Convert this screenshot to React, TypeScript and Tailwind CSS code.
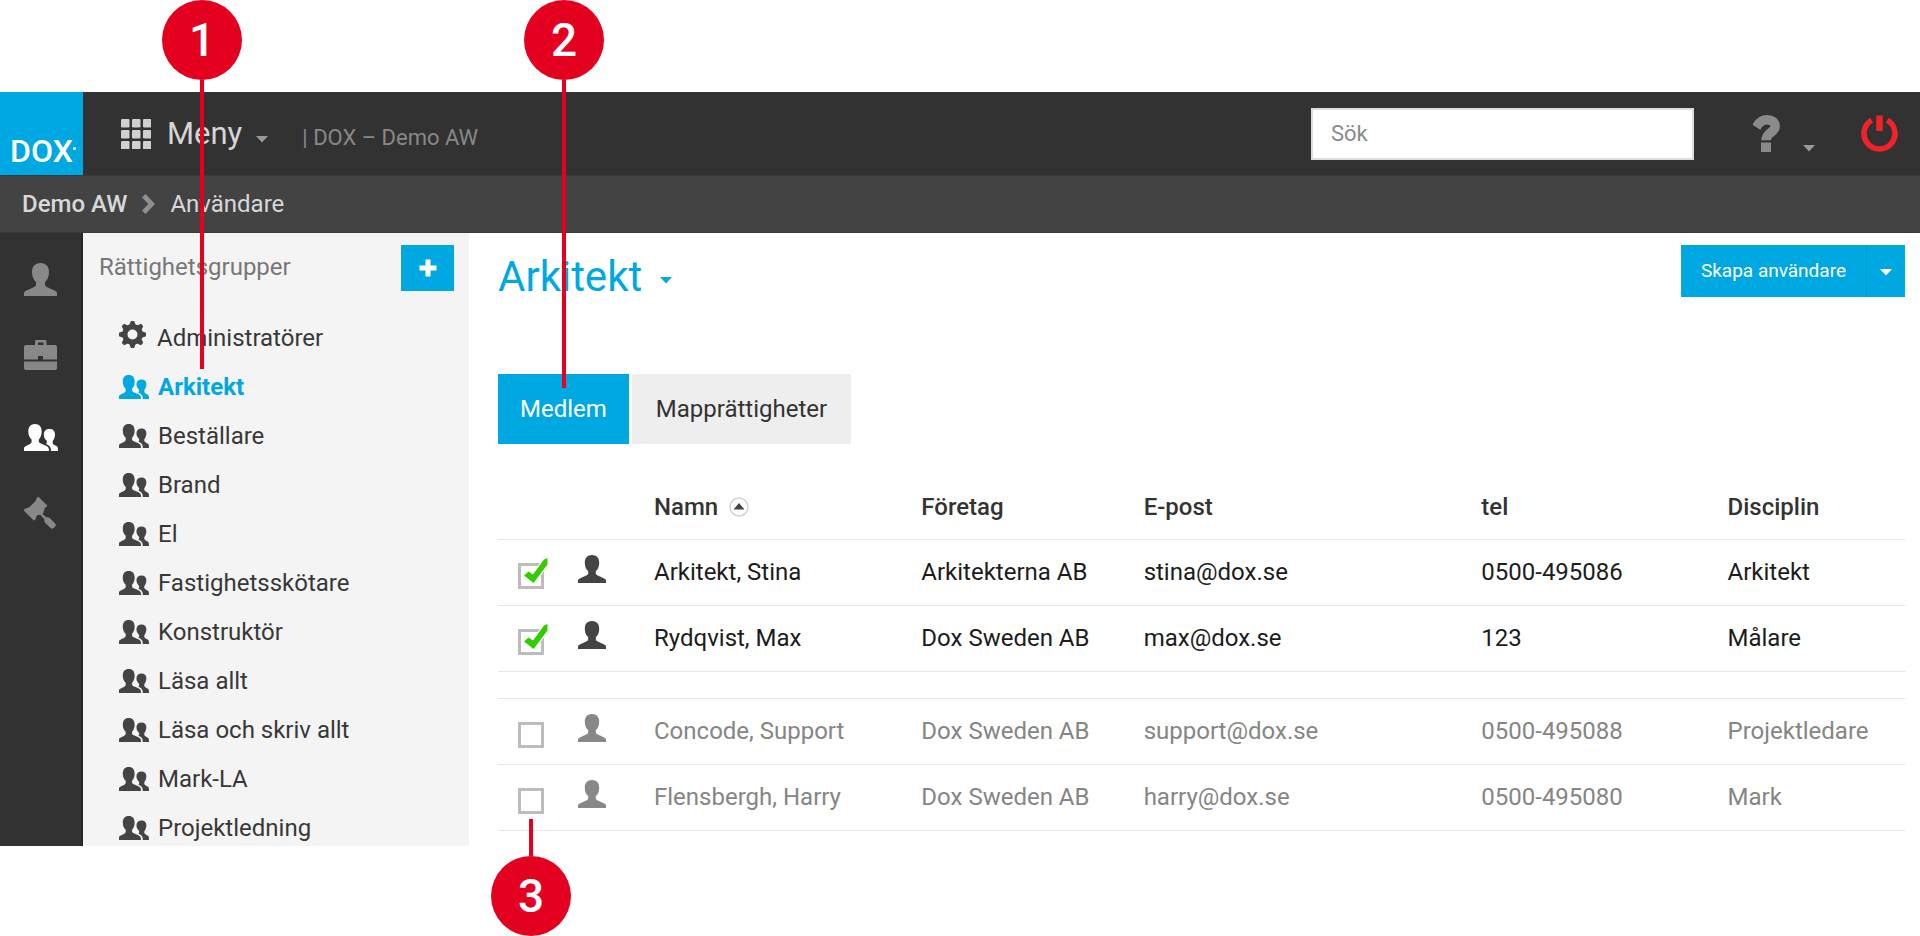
import type { ReactNode } from "react";

const USER_PATH =
  "M16.5 0C22 0 25 3.5 25 9c0 4-1.500 8-4 10v2.500c0 1.500 1 2.300 3 3.100l7.500 3.400c1.100.6 1.500 1.200 1.500 2.500V33H0v-2.500c0-1.300.4-1.900 1.500-2.500L9 24.600c2-.8 3-1.600 3-3.100V19c-2.500-2-4-6-4-10 0-5.500 3-9 8.500-9z";
const USERS_BIG =
  "M11 0c4.500 0 6.700 3 6.700 7.500 0 3.500-1.200 6-2.900 8v2c.2 1.100 1.200 1.700 2.700 2.300l5 2.200c1.800 1 2.500 2 2.500 5H0v-2.500c0-1.100.5-1.700 1.500-2.200L6 20c1-.7 1.600-1.200 1.600-2.500v-2C5.500 13.500 4.300 11 4.300 7.500 4.300 3 6.500 0 11 0z";
const USERS_SMALL =
  "M25.500 5C29 5 31 7 31 10.500c0 3-1 5-2.300 6.500v2c0 1 .8 1.600 2.100 2.200l2 1c.9.6 1.200 1.300 1.200 4.800h-7c0-3-1-4.700-3-6l-2.200-1c.9-.5 1-1 1-2v-1.200c-2.100-1.800-3-3.800-3-6.300C19.800 7 22 5 25.500 5z";

function UserIcon({ className }: { className: string }) {
  return (
    <svg viewBox="0 0 33 33" className={className} fill="currentColor" aria-hidden="true">
      <path d={USER_PATH} />
    </svg>
  );
}

function UsersIcon({ className }: { className: string }) {
  return (
    <svg viewBox="0 0 34 27" className={className} fill="currentColor" aria-hidden="true">
      <path d={USERS_BIG} />
      <path d={USERS_SMALL} />
    </svg>
  );
}

function BriefcaseIcon({ className }: { className: string }) {
  return (
    <svg viewBox="0 0 33 30" className={className} fill="currentColor" aria-hidden="true">
      <path
        fillRule="evenodd"
        d="M12.500 0h8.500c1 0 1.500.6 1.500 1.500V5h8.500c1.200 0 2 .8 2 2v12.500H19V16h-5v3.500H0V7c0-1.200.8-2 2-2h9V1.500C11 .6 11.500 0 12.500 0zM14 2.500V5h5.500V2.500z"
      />
      <path d="M0 21.500h33V28c0 1.200-.8 2-2 2H2c-1.200 0-2-.8-2-2z" />
    </svg>
  );
}

function GavelIcon({ className }: { className: string }) {
  return (
    <svg viewBox="0 0 32 32" className={className} fill="currentColor" aria-hidden="true">
      <path d="M13 .5c.7-.7 1.500-.7 2.200 0l7.300 7.300c.7.7.7 1.500 0 2.200l-1.800 1-1.200 4.500L18.500 17l4 3.500c1.200-.5 2.300-.3 3.200.6l5.400 5.400c1 1 1 2.100 0 3.100l-1.500 1.500c-1 1-2.100 1-3.100 0l-5.400-5.400c-.9-.9-1.100-2-.6-3.200l-4.200-4.800-3.300.5-1.800 4.500c-.7.7-1.500.7-2.200 0L.5 14.200c-.7-.7-.7-1.500 0-2.200l4.700-1.800 6-5.700z" />
    </svg>
  );
}

function GearIcon({ className }: { className: string }) {
  return (
    <svg viewBox="0 0 27 27" className={className} aria-hidden="true">
      <circle cx="13.500" cy="13.500" r="7.700" fill="none" stroke="currentColor" strokeWidth="5.400" />
      <g fill="currentColor">
        {[0, 45, 90, 135, 180, 225, 270, 315].map((a) => (
          <path key={a} transform={`rotate(${a} 13.500 13.500)`} d="M10.200 4.500L11.600.5c.1-.3.300-.5.700-.5h2.400c.4 0 .6.2.7.5l1.400 4z" />
        ))}
      </g>
    </svg>
  );
}

function Caret({ className }: { className: string }) {
  return (
    <svg viewBox="0 0 12 7" className={"h-[7px] w-3 shrink-0 " + className} fill="currentColor" aria-hidden="true">
      <path d="M0 0h12L6 6.500z" />
    </svg>
  );
}

const groups = [
  "Administratörer",
  "Arkitekt",
  "Beställare",
  "Brand",
  "El",
  "Fastighetsskötare",
  "Konstruktör",
  "Läsa allt",
  "Läsa och skriv allt",
  "Mark-LA",
  "Projektledning",
];

type Person = { name: string; company: string; email: string; tel: string; discipline: string };

const members: Person[] = [
  { name: "Arkitekt, Stina", company: "Arkitekterna AB", email: "stina@dox.se", tel: "0500-495086", discipline: "Arkitekt" },
  { name: "Rydqvist, Max", company: "Dox Sweden AB", email: "max@dox.se", tel: "123", discipline: "Målare" },
];
const others: Person[] = [
  { name: "Concode, Support", company: "Dox Sweden AB", email: "support@dox.se", tel: "0500-495088", discipline: "Projektledare" },
  { name: "Flensbergh, Harry", company: "Dox Sweden AB", email: "harry@dox.se", tel: "0500-495080", discipline: "Mark" },
];

function PersonRow({ person, member }: { person: Person; member: boolean }) {
  return (
    <tr className={"border-b border-[#e6e6e6] " + (member ? "text-[#1c1c1c]" : "text-[#858585]")}>
      <td className="pt-[23px] pl-5 align-top">
        <label className="relative block size-[26px]">
          <input
            type="checkbox"
            defaultChecked={member}
            aria-label={person.name}
            className="peer block size-[26px] appearance-none border-3 border-[#bcbcbc] bg-white"
          />
          <svg
            viewBox="0 0 25 26"
            className="pointer-events-none absolute -top-[5px] left-[6px] hidden h-[26px] w-[25px] peer-checked:block"
            aria-hidden="true"
          >
            <path d="M2 16l7 6L23 2" fill="none" stroke="#fff" strokeWidth="8" />
            <path d="M0 17.500L4.500 13.500 9 16.500 20 1.500 23.500 0v6.500L9.500 25z" fill="#3c0" />
          </svg>
        </label>
      </td>
      <td className="pt-[15px] align-top">
        <UserIcon className={"size-7 " + (member ? "text-[#444]" : "text-[#888]")} />
      </td>
      <td className="pt-4 pb-[17px]">{person.name}</td>
      <td className="pt-4 pb-[17px]">{person.company}</td>
      <td className="pt-4 pb-[17px]">{person.email}</td>
      <td className="pt-4 pb-[17px]">{person.tel}</td>
      <td className="pt-4 pb-[17px]">{person.discipline}</td>
    </tr>
  );
}

function RailLink({ label, active, children }: { label: string; active?: boolean; children: ReactNode }) {
  return (
    <a href="#" aria-label={label} className={active ? "text-white" : "text-[#888]"}>
      {children}
    </a>
  );
}

function Badge({ children }: { children: ReactNode }) {
  return (
    <span className="flex size-20 items-center justify-center rounded-full bg-[#e4001f] text-[46px] leading-[80px] font-medium text-white">
      {children}
    </span>
  );
}

export default function App() {
  return (
    <div className="relative bg-white pt-[92px] pb-[90px] font-['Roboto','Liberation_Sans',sans-serif] text-[24px] leading-8 text-[#333]">
      <header className="flex h-[83px] items-center bg-[#323232] pr-[22px]">
        <a
          href="#"
          aria-label="DOX"
          className="relative flex h-full w-[83px] shrink-0 items-end justify-center bg-[#00a8e1] pb-1 text-[32px] leading-[40px] font-medium text-white"
        >
          DOX
          <span className="absolute right-[7px] bottom-[25px] size-[3px] rounded-full bg-white" />
        </a>
        <button type="button" className="ml-[38px] flex items-center text-[31px] leading-10 text-[#d6d6d6]">
          <svg viewBox="0 0 30 30" className="mr-4 size-[30px]" fill="#d0d0d0" aria-hidden="true">
            {[0, 11, 22].map((y) => [0, 11, 22].map((x) => <rect key={`${x}-${y}`} x={x} y={y} width="8.500" height="8.500" rx="1.200" />))}
          </svg>
          Meny
          <Caret className="mt-3 ml-[14px] text-[#999]" />
        </button>
        <span className="mt-2 ml-[34px] text-[22px] text-[#888]">| DOX – Demo AW</span>
        <input
          type="search"
          aria-label="Sök"
          placeholder="Sök"
          className="ml-auto h-[52px] w-[383px] border-2 border-[#ddd] bg-white px-[18px] text-[22px] placeholder:text-[#8a8a8a]"
        />
        <button type="button" aria-label="Hjälp" className="ml-[59px] flex items-end text-[#8a8a8a]">
          <svg viewBox="0 0 27 37" className="h-[37px] w-[27px]" aria-hidden="true">
            <path d="M3.200 12.200C6.300 7 10 4.800 14 4.800c5 0 8.200 2.500 8.200 6.400 0 6-9.200 6.300-9.200 14" fill="none" stroke="currentColor" strokeWidth="9.500" />
            <path d="M8 27.500h10V37H8z" fill="currentColor" />
          </svg>
          <Caret className="ml-[23px] text-[#999]" />
        </button>
        <button type="button" aria-label="Logga ut" className="ml-[46px] text-[#f12229]">
          <svg viewBox="0 0 37 37" className="size-[37px]" fill="none" stroke="currentColor" aria-hidden="true">
            <path d="M10.700 5.100A15.500 15.500 0 1 0 26.300 5.100" strokeWidth="5.500" />
            <path d="M18.500 .5v15.500" strokeWidth="6.500" />
          </svg>
        </button>
      </header>

      <nav className="flex h-[58px] items-center border-y border-[#3a3a3a] bg-[#434343] pl-[22px] text-[#d8d8d8]">
        <a href="#" className="font-medium">
          Demo AW
        </a>
        <svg viewBox="0 0 13 20" className="mx-[15px] h-5 w-[13px]" fill="#8f8f8f" aria-hidden="true">
          <path d="M3.500 0L13 10l-9.500 10L0 16.600 6.300 10 0 3.400z" />
        </svg>
        <a href="#">Användare</a>
      </nav>

      <div className="flex">
        <aside className="flex w-[83px] shrink-0 flex-col items-start border-r-2 border-[#262626] bg-[#323232] pt-[30px] pl-6">
          <RailLink label="Användare">
            <UserIcon className="mb-11 size-[33px]" />
          </RailLink>
          <RailLink label="Projekt">
            <BriefcaseIcon className="mb-[54px] h-[30px] w-[33px]" />
          </RailLink>
          <RailLink label="Rättighetsgrupper" active>
            <UsersIcon className="mb-[46px] h-[27px] w-[34px]" />
          </RailLink>
          <RailLink label="Regler">
            <GavelIcon className="size-8" />
          </RailLink>
        </aside>

        <section className="w-[386px] shrink-0 bg-[#f4f4f4] pt-3 pb-[2px]">
          <div className="flex items-start justify-between pr-[15px] pl-4">
            <h2 className="mt-[6px] text-[#777]">Rättighetsgrupper</h2>
            <button type="button" aria-label="Lägg till grupp" className="flex h-[46px] w-[53px] items-center justify-center bg-[#00a8e1]">
              <svg viewBox="0 0 18 18" className="size-[18px]" fill="#fff" aria-hidden="true">
                <path d="M6.500 0.500h5v6h6v5h-6v6h-5v-6h-6v-5h6z" />
              </svg>
            </button>
          </div>
          <ul className="mt-[30px] flex flex-col gap-[17px] pl-9">
            {groups.map((g, i) => (
              <li key={g}>
                <a href="#" className={"flex items-center gap-[9px] " + (g === "Arkitekt" ? "font-bold text-[#00a8e1]" : "text-[#383838]")}>
                  {i === 0 ? (
                    <GearIcon className="mr-[2px] mb-[6px] size-[27px] text-[#444]" />
                  ) : (
                    <UsersIcon className={"h-6 w-[30px] " + (g === "Arkitekt" ? "text-[#00a8e1]" : "text-[#444]")} />
                  )}
                  {g}
                </a>
              </li>
            ))}
          </ul>
        </section>

        <main className="min-w-0 flex-1 pt-3 pr-[15px] pl-[29px]">
          <div className="flex items-start justify-between">
            <h1 className="mt-[7px]">
              <button type="button" className="flex items-center text-[42px] leading-[50px] text-[#00a8e1]">
                Arkitekt
                <Caret className="mt-[6px] ml-[18px]" />
              </button>
            </h1>
            <div className="flex h-[52px] bg-[#00a8e1] text-[19px] text-white">
              <button type="button" className="px-5">
                Skapa användare
              </button>
              <button type="button" aria-label="Fler val" className="flex items-center border-l border-[#0099d0] px-[13px]">
                <Caret className="mt-[2px]" />
              </button>
            </div>
          </div>

          <div role="tablist" className="mt-[72px] flex gap-[3px]">
            <button type="button" role="tab" aria-selected="true" className="h-[70px] bg-[#00a8e1] px-[22px] text-white">
              Medlem
            </button>
            <button type="button" role="tab" aria-selected="false" className="h-[70px] bg-[#eee] px-6">
              Mapprättigheter
            </button>
          </div>

          <table className="mt-[47px] w-full table-fixed border-collapse text-left">
            <colgroup>
              <col className="w-20" />
              <col className="w-[76px]" />
              <col className="w-[19%]" />
              <col className="w-[15.8%]" />
              <col className="w-[24%]" />
              <col className="w-[17.5%]" />
              <col />
            </colgroup>
            <thead>
              <tr className="border-b border-[#e6e6e6]">
                <td />
                <td />
                <th className="pb-4 font-medium" aria-sort="ascending">
                  <button type="button" className="flex items-center gap-[11px]">
                    Namn
                    <svg viewBox="0 0 20 20" className="size-5" aria-hidden="true">
                      <circle cx="10" cy="10" r="9" fill="#fff" stroke="#d2d2d2" strokeWidth="1.500" />
                      <path d="M10 6l5.500 6.500h-11z" fill="#444" />
                    </svg>
                  </button>
                </th>
                <th className="pb-4 font-medium">Företag</th>
                <th className="pb-4 font-medium">E-post</th>
                <th className="pb-4 font-medium">tel</th>
                <th className="pb-4 font-medium">Disciplin</th>
              </tr>
            </thead>
            <tbody>
              {members.map((p) => (
                <PersonRow key={p.name} person={p} member />
              ))}
            </tbody>
            <tbody>
              <tr className="border-b border-[#e6e6e6]">
                <td colSpan={7} className="h-[27px]" />
              </tr>
              {others.map((p) => (
                <PersonRow key={p.name} person={p} member={false} />
              ))}
            </tbody>
          </table>
        </main>
      </div>

      {/* Numbered callouts lying over the page */}
      <div className="pointer-events-none absolute top-0 left-[162px] flex flex-col items-center">
        <Badge>1</Badge>
        <span className="h-[289px] w-1 bg-[#e4001f]" />
      </div>
      <div className="pointer-events-none absolute top-0 left-[524px] flex flex-col items-center">
        <Badge>2</Badge>
        <span className="h-[308px] w-1 bg-[#e4001f]" />
      </div>
      <div className="pointer-events-none absolute top-[819px] left-[491px] flex flex-col items-center">
        <span className="h-[37px] w-1 bg-[#e4001f]" />
        <Badge>3</Badge>
      </div>
    </div>
  );
}
